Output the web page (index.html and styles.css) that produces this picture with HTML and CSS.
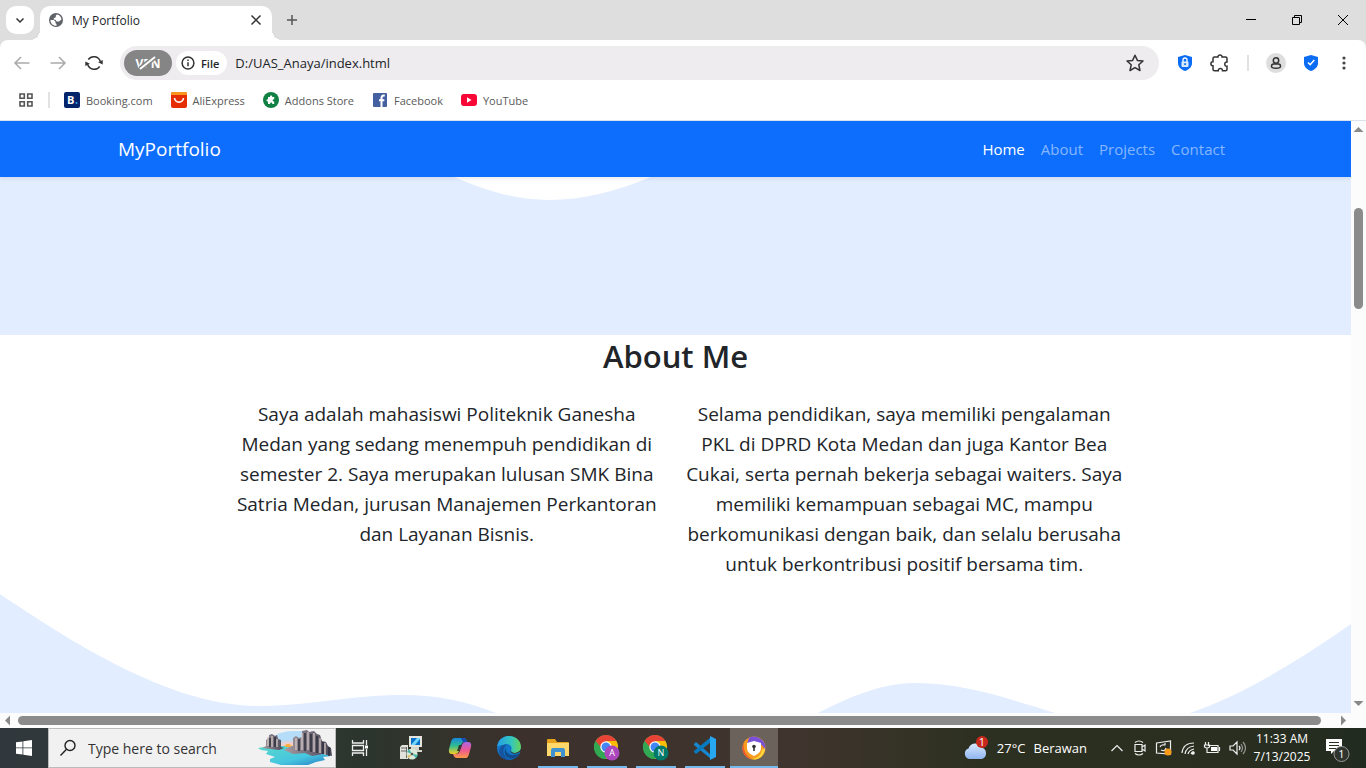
FILE: index.html
```html
<!DOCTYPE html>
<html lang="id">
<head>
<meta charset="utf-8">
<title>My Portfolio</title>
<meta name="viewport" content="width=device-width, initial-scale=1">
<link rel="stylesheet" href="styles.css">
</head>
<body>
<header class="browser">
  <div class="tabstrip">
    <button class="tab-search" aria-label="Search tabs"><svg width="28" height="28" viewBox="0 0 28 28"><path d="M10.500 12.500l3.500 3.500 3.500-3.500" class="ln" stroke-width="2"/></svg></button>
    <div class="tab">
      <svg width="16" height="16" viewBox="0 0 16 16"><circle cx="8" cy="8" r="7" fill="#5f6368"/><path d="M2.500 8h3.300l1.700 1.700v1.600l1 .8v1.700C5 14 2.500 11.500 2.500 8zM9 2.500c2.500.4 4.300 2.500 4.500 5L11 9.500H8.600L7.500 7.700H5.800V6.200l2-1V3.500z" fill="#fff"/></svg>
      <span class="tab-title">My Portfolio</span>
      <button class="plain" aria-label="Close tab"><svg width="16" height="16" viewBox="0 0 16 16"><path d="M3.500 3.500l9 9M12.500 3.500l-9 9" class="ln"/></svg></button>
    </div>
    <button class="plain new-tab" aria-label="New tab"><svg width="16" height="16" viewBox="0 0 16 16"><path d="M8 3v10M3 8h10" class="ln soft"/></svg></button>
    <div class="window-buttons">
      <button class="plain" aria-label="Minimize"><svg width="46" height="40" viewBox="0 0 46 40"><path d="M18 19.500h10" stroke="#000"/></svg></button>
      <button class="plain" aria-label="Restore"><svg width="46" height="40" viewBox="0 0 46 40" fill="none" stroke="#000"><path d="M18.500 17.500h7v7h-7zM20.500 17.500v-2h7v7h-2"/></svg></button>
      <button class="plain" aria-label="Close"><svg width="46" height="40" viewBox="0 0 46 40"><path d="M18 15l10 10M28 15L18 25" stroke="#000"/></svg></button>
    </div>
  </div>
  <div class="toolbar">
    <div class="nav-buttons">
      <button class="plain" aria-label="Back"><svg width="20" height="20" viewBox="0 0 20 20"><path d="M17.500 10H3M9 4l-6 6 6 6" class="ln muted"/></svg></button>
      <button class="plain" aria-label="Forward"><svg width="20" height="20" viewBox="0 0 20 20"><path d="M2.500 10H17M11 4l6 6-6 6" class="ln muted"/></svg></button>
      <button class="plain" aria-label="Reload"><svg width="20" height="20" viewBox="0 0 20 20"><path d="M4.300 6.500a6.800 6.800 0 0 1 12 2M15.700 13.500a6.800 6.800 0 0 1-12-2" class="ln"/><path d="M18.700 7v4.500l-4.600-2.200zM1.300 13V8.500l4.600 2.200z" fill="#333"/></svg></button>
    </div>
    <div class="omnibox">
      <span class="vpn">VPN<svg class="vpn-strike" width="26" height="18" viewBox="0 0 26 18"><path d="M5 15L20 3" stroke="#858585" stroke-width="5"/><path d="M5 15L20 3" stroke="#fff" stroke-width="2"/></svg></span>
      <span class="file-chip"><svg width="14" height="14" viewBox="0 0 14 14"><circle cx="7" cy="7" r="5.900" class="ln"/><path d="M7 6.300v4M7 3.500v1.400" class="ln"/></svg>File</span>
      <input class="address" type="text" aria-label="Address" value="D:/UAS_Anaya/index.html">
      <button class="plain" aria-label="Bookmark"><svg width="20" height="20" viewBox="0 0 20 20"><path d="M10 2.200l2.400 5.200 5.600.6-4.200 3.800 1.200 5.700-5-2.900-5 2.900 1.200-5.700L2 8l5.600-.6z" class="ln" stroke-linejoin="round"/></svg></button>
    </div>
    <div class="extensions">
      <button class="plain" aria-label="Privacy"><svg width="16" height="18" viewBox="0 0 16 18"><path d="M8 1l7 2v6c0 4-3 6.500-7 8-4-1.500-7-4-7-8V3z" fill="#0b6cf4"/><rect x="4.500" y="7.500" width="7" height="5.500" rx="1" fill="#dcecff"/><path d="M6 8V6a2 2 0 0 1 4 0v2" fill="none" stroke="#fff" stroke-width="1.300"/><path d="M7 9.200l2 2m0-2l-2 2" stroke="#0b6cf4"/></svg></button>
      <button class="plain" aria-label="Extensions"><svg width="20" height="20" viewBox="0 0 20 20"><path d="M3 5.500q0-1.500 1.500-1.500H8c-.4-2.700 4.400-2.700 4 0h3.500Q17 4 17 5.500V9c-3-.2-3 4.500 0 4.200v3q0 1.500-1.500 1.500h-3c.2-3-4.500-3-4.200 0H4.500Q3 17.700 3 16.200v-3.500c-2.800 0-2.800-4 0-4z" class="ln"/></svg></button>
      <span class="divider"></span>
      <button class="profile" aria-label="Profile"><svg width="14" height="14" viewBox="0 0 14 14"><circle cx="7" cy="4.500" r="2.700" class="ln"/><path d="M4.500 8h5q2 0 2 2.500 0 1.700-4.500 1.700T2.500 10.500Q2.500 8 4.500 8z" class="ln"/></svg></button>
      <button class="plain" aria-label="Protection"><svg width="16" height="18" viewBox="0 0 16 18"><path d="M8 1l7 2v6c0 4-3 6.500-7 8-4-1.500-7-4-7-8V3z" fill="#0b6cf4"/><path d="M5 8.500l2.200 2.200L11.300 6" fill="none" stroke="#fff" stroke-width="1.600"/></svg></button>
      <button class="plain" aria-label="Menu"><svg width="16" height="18" viewBox="0 0 16 18" fill="#444"><circle cx="8" cy="4" r="1.600"/><circle cx="8" cy="9" r="1.600"/><circle cx="8" cy="14" r="1.600"/></svg></button>
    </div>
  </div>
  <nav class="bookmarks" aria-label="Bookmarks">
    <button class="plain" aria-label="All bookmarks"><svg width="16" height="16" viewBox="0 0 16 16" fill="none" stroke="#555" stroke-width="1.600"><path d="M2 2h4.300v4.300H2zM9.700 2H14v4.300H9.700zM2 9.700h4.300V14H2zM9.700 9.700H14V14H9.700z"/></svg></button>
    <span class="divider"></span>
    <a href="#"><svg width="16" height="16" viewBox="0 0 16 16"><rect width="16" height="16" rx="2" fill="#03246b"/><text x="3" y="12" class="brand-b">B</text><circle cx="12.500" cy="11" r="1" fill="#31a8f0"/></svg>Booking.com</a>
    <a href="#"><svg width="16" height="16" viewBox="0 0 16 16"><rect width="16" height="16" rx="2" fill="#e62e04"/><path d="M0 3V2q0-2 2-2h12q2 0 2 2v1z" fill="#f7971d"/><path d="M3.500 6c.7 5.500 8.300 5.500 9 0" fill="none" stroke="#fff" stroke-width="1.600"/></svg>AliExpress</a>
    <a href="#"><svg width="16" height="16" viewBox="0 0 16 16"><circle cx="8" cy="8" r="8" fill="#108043"/><path d="M5 5h2c-.5-2 2.800-2 2.200 0h2v2.200c-2-.5-2 2.600 0 2.200V12H9.300c.4-2-2.500-2-2.200 0H5V9.500c-2 .3-2-2.700 0-2.300z" fill="#fff"/></svg>Addons Store</a>
    <a href="#"><svg width="16" height="16" viewBox="0 0 16 16"><rect x="1" y="1" width="14" height="14" rx="1" fill="#4460a0"/><path d="M12.800 3.500h-1c-1.800 0-2.300 1-2.300 2.500V15M7 8.300h5.300" fill="none" stroke="#fff" stroke-width="2"/></svg>Facebook</a>
    <a href="#"><svg width="16" height="16" viewBox="0 0 16 16"><rect y="2" width="16" height="12" rx="3" fill="#f80736"/><path d="M6 5.300l4.500 2.700L6 10.700z" fill="#fff"/></svg>YouTube</a>
  </nav>
</header>

<div class="viewport">
  <div class="site">
    <nav class="navbar">
      <a class="brand" href="#">MyPortfolio</a>
      <div class="links"><a class="active" href="#">Home</a><a href="#about">About</a><a href="#projects">Projects</a><a href="#contact">Contact</a></div>
    </nav>
    <svg class="hero-wave" viewBox="0 0 1351 158" preserveAspectRatio="none"><path fill="#e2edff" d="M0 0H454C487 14 516 23 549 23C583 23 617 14 651 0H1351V158H0z"/></svg>
    <section class="about" id="about">
      <h1>About Me</h1>
      <div class="columns">
        <p>Saya adalah mahasiswi Politeknik Ganesha<br>Medan yang sedang menempuh pendidikan di<br>semester 2. Saya merupakan lulusan SMK Bina<br>Satria Medan, jurusan Manajemen Perkantoran<br>dan Layanan Bisnis.</p>
        <p>Selama pendidikan, saya memiliki pengalaman<br>PKL di DPRD Kota Medan dan juga Kantor Bea<br>Cukai, serta pernah bekerja sebagai waiters. Saya<br>memiliki kemampuan sebagai MC, mampu<br>berkomunikasi dengan baik, dan selalu berusaha<br>untuk berkontribusi positif bersama tim.</p>
      </div>
    </section>
    <svg class="about-wave" viewBox="0 0 1351 119" preserveAspectRatio="none"><path fill="#e2edff" d="M0 0C70 47 170 112 258 112C310 112 350 101 403 101C435 101 463 106 496 119H0zM818 119C855 100 885 89 915 89C965 89 1005 104 1055 119zM1190 119C1245 100 1299 66 1351 30V119z"/></svg>
  </div>
  <div class="vbar"><svg width="15" height="16" viewBox="0 0 15 16"><path d="M7.500 6l5 5h-10z" fill="#898989"/></svg><span class="vthumb"></span><svg width="15" height="16" viewBox="0 0 15 16"><path d="M7.500 9l5-5h-10z" fill="#898989"/></svg></div>
  <div class="hbar"><svg width="15" height="15" viewBox="0 0 15 15"><path d="M5 7.500l5-5v10z" fill="#898989"/></svg><span class="hthumb"></span><svg width="15" height="15" viewBox="0 0 15 15"><path d="M10 7.500l-5-5v10z" fill="#898989"/></svg></div>
</div>

<footer class="taskbar">
  <button class="plain start" aria-label="Start"><svg width="16" height="16" viewBox="0 0 16 16" fill="#fff"><path d="M0 2.300L6.500 1.400V7.500H0zM7.300 1.300L16 0v7.500H7.300zM0 8.300h6.500v6.300L0 13.700zM7.300 8.300H16V16l-8.700-1.300z"/></svg></button>
  <label class="search">
    <svg width="18" height="18" viewBox="0 0 18 18" fill="none" stroke="#222" stroke-width="1.400"><circle cx="11" cy="6.500" r="5"/><path d="M7.500 10.200L1.500 16.500"/></svg>
    <input type="text" placeholder="Type here to search" aria-label="Type here to search">
    <svg width="76" height="36" viewBox="0 0 76 36">
      <defs><linearGradient id="sea" x2="1" y2="1"><stop stop-color="#57d8cc"/><stop offset=".6" stop-color="#46c6df"/><stop offset="1" stop-color="#2478c4"/></linearGradient><linearGradient id="rock"><stop stop-color="#a99da2"/><stop offset=".5" stop-color="#756d7c"/><stop offset="1" stop-color="#4a4858"/></linearGradient><radialGradient id="sun" cy="1"><stop stop-color="#ffbd58"/><stop offset=".5" stop-color="#f9cdc5"/><stop offset="1" stop-color="#b5dcf8"/></radialGradient></defs>
      <path d="M11 18V10Q22 1 36 1h14l9 17z" fill="url(#sun)"/>
      <path d="M1 18l14-2h43l16 10-8 1 2 3-9 2-8 3H24l-11-3v-3l5-2-9-3 2-3-7-1z" fill="url(#sea)"/>
      <path d="M5 18l4-2v-6l3-3v-2l3-1 3 2 2-1 1 4 3 1v7l3 1-5 2z" fill="url(#rock)"/>
      <path d="M27 20l5-3 4-1V8l3-2 3 2 3-1V1l5-1 2 2 5-1 3 3 3 1 2 6 4 1 2 4 3 2 1 8-9-2-11 2-7-3-12 1z" fill="url(#rock)"/>
      <path d="M11 7v9M15 6v11M20 9v8M39 8v12M45 3v17M51 2v18M57 3v19M63 8v15M68 13v12" stroke="#d8c8c4" stroke-width="1.300"/><path d="M13 8v9M18 7v10M42 9v12M48 3v18M54 4v18M60 6v17M66 12v12M72 17v9" stroke="#292b38" stroke-width="1.400"/>
      <path d="M28 17a3 3 0 0 1 6 0z" fill="#ffac38"/>
    </svg>
  </label>
  <div class="apps">
    <button class="app task-view" aria-label="Task view"><svg width="24" height="24" viewBox="0 0 24 24" fill="none" stroke="#eee" stroke-width="1.300"><path d="M4.500 4v3h11V4M4.500 20v-3h11v3M4.500 9.500h11v5h-11zM18.500 4v5M18.500 13v7"/><path d="M17 9.500h3v3h-3z" fill="#fff" stroke="none"/></svg></button>
    <button class="app" aria-label="Installer"><svg width="24" height="24" viewBox="0 0 24 24"><path d="M1 11l2-2h6v14H1z" fill="#e2e2dc"/><path d="M2 12h5M2 15h5M7.500 11v11" stroke="#666"/><path d="M10 0h13v11H10z" fill="#e5e5dd"/><path d="M12 2h9v7h-9z" fill="#0870c9"/><path d="M12 9l6-7h3v1l-5 6z" fill="#75d6ff"/><path d="M12 11h8v3h3v2H10v-2h2z" fill="#d5d5cc"/><circle cx="13" cy="18" r="5.500" fill="#dce9da"/><path d="M13 18l-5-2 2-3zm0 0l4 4 2-3z" fill="#42b5a8"/><path d="M13 18l-3 4-2-2z" fill="#e0bd62"/><circle cx="13" cy="18" r="1.300" fill="#555"/></svg></button>
    <button class="app" aria-label="Copilot"><svg width="24" height="24" viewBox="0 0 24 24"><defs><linearGradient id="ca" x2="0" y2="1"><stop stop-color="#1588df"/><stop offset=".5" stop-color="#31bd8d"/><stop offset="1" stop-color="#f8cf24"/></linearGradient><linearGradient id="cb" x2="0" y2="1"><stop stop-color="#ad67e6"/><stop offset=".5" stop-color="#ee5791"/><stop offset="1" stop-color="#fb9a46"/></linearGradient></defs><path d="M7 2h9q2 0 3 4h-3q-2 0-3 3l-2 6q-1 3-4 3H4q-4 0-3-5l2-7q1-4 4-4z" fill="url(#ca)"/><path d="M17 22H9q-3 0-4-4h3q3 0 4-3l2-6q1-3 4-3h2q4 0 3 5l-2 7q-1 4-3 4z" fill="url(#cb)"/><path d="M11 9h3l-3 6H9z" fill="#3a3430"/><path d="M13 2h3q2 0 3 4h-4z" fill="#184db7"/></svg></button>
    <button class="app" aria-label="Edge"><svg width="26" height="26" viewBox="0 0 24 24"><defs><linearGradient id="ea"><stop stop-color="#229ee6"/><stop offset=".6" stop-color="#35c6bd"/><stop offset="1" stop-color="#65d45a"/></linearGradient></defs><circle cx="12" cy="12" r="11" fill="#1277cb"/><path d="M1 11C2 3 8 1 12 1c7 0 11 5 11 10 0 4-3 6-6 6-2 0-4-1-3-3 2-4-3-7-7-5-3 0-5 1-6 2z" fill="url(#ea)"/><path d="M10 9c-5 3-4 12 4 14-7 1-12-4-11-9 1-4 5-6 7-5z" fill="#16549f"/><path d="M10 11c-3 4 2 9 9 7l3-1c-2 3-5 5-8 5-6-1-8-7-4-11z" fill="#114b8b"/><path d="M13.500 14c-1 3 5 5 9.500 1v-2c-2 4-8 5-9.500 1z" fill="#332f2b"/></svg></button>
    <button class="app running" aria-label="File Explorer"><svg width="24" height="24" viewBox="0 0 24 24"><path d="M1 4q0-1 1-1h7l2 3h11q1 0 1 1v13H1z" fill="#e5a21a"/><path d="M1 7h22v13H1z" fill="#ffd86b"/><path d="M5 21v-7q0-2 2-2h10q2 0 2 2v7h-4v-5H9v5z" fill="#3f91d0"/></svg></button>
    <button class="app running" aria-label="Chrome profile A"><svg width="28" height="26" viewBox="0 0 28 26"><circle cx="13" cy="12" r="12" fill="#32a853"/><path d="M2.600 6a12 12 0 0 1 20.800 0H13v12z" fill="#e94335"/><path d="M23.400 6A12 12 0 0 1 13 24l5-9-5-9z" fill="#fbbc05"/><path d="M2.600 6L8 15h7l-2 9A12 12 0 0 1 2.600 6" fill="#32a853"/><circle cx="13" cy="12" r="5.700" fill="#fff"/><circle cx="13" cy="12" r="4.500" fill="#4285f4"/><circle cx="19" cy="18" r="7.500" fill="#ab47bc"/><text x="19" y="21" class="badge-text">A</text></svg></button>
    <button class="app running" aria-label="Chrome profile N"><svg width="28" height="26" viewBox="0 0 28 26"><circle cx="13" cy="12" r="12" fill="#32a853"/><path d="M2.600 6a12 12 0 0 1 20.800 0H13v12z" fill="#e94335"/><path d="M23.400 6A12 12 0 0 1 13 24l5-9-5-9z" fill="#fbbc05"/><path d="M2.600 6L8 15h7l-2 9A12 12 0 0 1 2.600 6" fill="#32a853"/><circle cx="13" cy="12" r="5.700" fill="#fff"/><circle cx="13" cy="12" r="4.500" fill="#4285f4"/><circle cx="19" cy="18" r="7.500" fill="#00796b"/><text x="19" y="21" class="badge-text">N</text></svg></button>
    <button class="app running" aria-label="Visual Studio Code"><svg width="24" height="24" viewBox="0 0 24 24"><path d="M1 8l2-2 15 13v4L1 9z" fill="#1687d0"/><path d="M1 16l2 2L18 6V1L1 15z" fill="#087abf"/><path d="M17 0l6 3v18l-6 3z" fill="#29a8f2"/></svg></button>
    <button class="app running current" aria-label="Secure browser"><svg width="24" height="24" viewBox="0 0 24 24"><circle cx="12" cy="12" r="11.500" fill="#f79c1c"/><path d="M7 1.700A11.500 11.500 0 0 1 23 15c-1-5-4-8-10-8L5 8z" fill="#7952d9"/><path d="M2 6c-1 7 1 13 8 17-6-1-10-5-9.500-12z" fill="#ee5b32"/><path d="M23 12c0 7-6 13-13 11 6-1 9-4 10-9z" fill="#ffd83f"/><path d="M12 5l7 2v5c0 4-3 6-7 8-4-2-7-4-7-8V7z" fill="#fff"/><circle cx="12" cy="10.500" r="1.800" fill="#333"/><path d="M11.200 11h1.600v4h-1.600z" fill="#333"/></svg></button>
  </div>
  <div class="weather"><svg width="26" height="26" viewBox="0 0 26 26"><defs><linearGradient id="cl" x2="0" y2="1"><stop stop-color="#d9e8ff"/><stop offset="1" stop-color="#8fb5ef"/></linearGradient></defs><path d="M6 24a5.500 5.500 0 0 1-.5-10.500 7 7 0 0 1 13-1A6 6 0 0 1 19 24z" fill="url(#cl)"/><circle cx="19" cy="7" r="6" fill="#c9281d"/><text x="19" y="11" class="alert-text">1</text></svg><span>27°C</span><span>Berawan</span></div>
  <div class="tray">
    <svg width="16" height="18" viewBox="0 0 16 18"><path d="M2.500 12L8 6.500l5.500 5.500"/></svg>
    <svg width="16" height="18" viewBox="0 0 16 18"><path d="M3 5.500h7v7H3zM10 8l3-2v6l-3-2M3 3.500q4-3 8 0M3 14.500q4 3 8 0"/></svg>
    <svg width="18" height="18" viewBox="0 0 18 18"><path d="M1.500 4l14-2v13l-14-1zM5 8q1-3 5-2M11 9q-1 4-5 2M10 4v2H7"/><circle cx="13" cy="13" r="3.500" fill="#f99b19" stroke="none"/></svg>
    <svg width="16" height="18" viewBox="0 0 16 18"><path d="M2 14Q3 4 14 4M5 15q1-7 9-8M8 15q1-4 6-5M11 15q1-2 3-2"/><circle cx="13" cy="14" r="1.200" fill="#fff"/></svg>
    <svg width="18" height="18" viewBox="0 0 18 18"><path d="M5 6.500h10v7H5M2.500 3v3M5.500 3v3M1.500 6h5v2q-2.500 2-5 0zM4 9v4.500h2M16.500 8v4"/><path d="M8 8h6v4H8z" fill="#fff" stroke="none"/></svg>
    <svg width="18" height="18" viewBox="0 0 18 18"><path d="M2 7h3l4-4v12l-4-4H2zM11 7q2 2 0 4"/><path d="M13 5q3 4 0 8M15 3q5 6 0 12" opacity=".55"/></svg>
  </div>
  <div class="clock"><span>11:33 AM</span><span>7/13/2025</span></div>
  <button class="plain notify" aria-label="Notifications"><svg width="26" height="28" viewBox="0 0 26 28"><path d="M1 5h16v12H9l-3 3v-3H1z" fill="#fff"/><path d="M4 8.500h10M4 11.500h10M4 14.500h7" stroke="#29301f" stroke-width="1.200"/><circle cx="16.500" cy="20" r="7.500" fill="#30342e" stroke="#999"/><text x="16.500" y="24" class="alert-text">1</text></svg></button>
</footer>
</body>
</html>
```
FILE: styles.css
```css
* { box-sizing: border-box; }
body { margin: 0; height: 100vh; display: flex; flex-direction: column; overflow: hidden; font-family: "Segoe UI", "Open Sans", "Noto Sans", sans-serif; color: #212529; background: #fff; }
button, input { font: inherit; color: inherit; }
svg { display: block; flex: none; }
a { text-decoration: none; }
.plain { border: 0; padding: 0; background: none; display: flex; align-items: center; justify-content: center; }
.ln { fill: none; stroke: #333; stroke-width: 1.5; }
.muted { stroke: #aaa; }
.soft { stroke: #555; }
.divider { width: 2px; height: 16px; background: #e2e2e2; }

.browser { flex: none; background: #dedede; border-bottom: 1px solid #d9e3ee; }
.tabstrip { display: flex; align-items: center; height: 40px; padding-left: 6px; }
.tab-search { width: 28px; height: 28px; padding: 0; border: 0; border-radius: 10px; background: #fff; margin-right: 6px; }
.tab { align-self: flex-end; position: relative; display: flex; align-items: center; gap: 8px; width: 232px; height: 34px; padding: 0 8px 6px; border-radius: 10px 10px 0 0; background: #fff; }
.tab::before, .tab::after { content: ""; position: absolute; bottom: 0; width: 10px; height: 10px; }
.tab::before { left: -10px; background: radial-gradient(circle at 0 0, transparent 10px, #fff 10px); }
.tab::after { right: -10px; background: radial-gradient(circle at 100% 0, transparent 10px, #fff 10px); }
.tab-title { flex: 1; font-size: 12px; }
.new-tab { margin-left: 12px; }
.window-buttons { display: flex; margin-left: auto; }
.toolbar { display: flex; align-items: center; height: 46px; background: #fff; border-radius: 8px 8px 0 0; }
.nav-buttons { display: flex; gap: 16px; padding: 0 16px 0 12px; }
.omnibox { flex: 1; display: flex; align-items: center; height: 34px; padding: 0 14px 0 4px; border-radius: 17px; background: #eeecee; }
.vpn { position: relative; display: flex; align-items: center; justify-content: center; width: 48px; height: 26px; border-radius: 13px; background: #858585; color: #fff; font-size: 12px; font-weight: 700; }
.vpn-strike { position: absolute; inset: 4px 11px; }
.file-chip { display: flex; align-items: center; gap: 6px; height: 24px; margin-left: 4px; padding: 0 8px 0 5px; border-radius: 12px; background: #fff; font-size: 11px; font-weight: 600; }
.address { flex: 1; min-width: 0; border: 0; background: none; outline: 0; padding: 0 8px; font-size: 13px; }
.extensions { display: flex; align-items: center; gap: 17px; padding: 0 14px 0 18px; }
.profile { display: flex; align-items: center; justify-content: center; width: 20px; height: 20px; padding: 0; border: 0; border-radius: 50%; background: #dedede; }
.bookmarks { display: flex; align-items: center; height: 34px; padding: 0 18px 6px; gap: 18px; background: #fff; font-size: 11px; }
.bookmarks .divider { margin: 0 -4px; }
.bookmarks a { display: flex; align-items: center; gap: 6px; color: #5a5a5a; }
.brand-b { font: 700 11px "Open Sans", sans-serif; fill: #fff; }

.viewport { flex: 1; min-height: 0; display: grid; grid-template-columns: minmax(0, 1fr) 15px; grid-template-rows: minmax(0, 1fr) 15px; background: #fcfcfc; }
.site { display: flex; flex-direction: column; overflow: hidden; background: #fff; }
.navbar { position: relative; flex: none; display: flex; align-items: center; justify-content: space-between; height: 56px; padding: 0 126px 0 118px; background: #0d6efd; box-shadow: 0 2px 4px rgba(0, 0, 0, .075); }
.brand { color: #fff; font-size: 19px; }
.links { display: flex; gap: 16px; font-size: 15px; }
.links a { color: #86b7fe; }
.links .active { color: #fff; }
.hero-wave { width: 100%; height: 158px; }
.about { padding: 0 228px; text-align: center; }
.about h1 { margin: 0 0 22px; font-size: 31px; line-height: 42px; font-weight: 600; }
.columns { display: grid; grid-template-columns: 1fr 1fr; gap: 20px; }
.columns p { margin: 0; font-size: 19px; line-height: 30px; white-space: nowrap; }
.about-wave { width: 100%; height: 119px; margin-top: auto; }
.vbar { display: flex; flex-direction: column; }
.vthumb { width: 9px; height: 101px; margin: 71px 3px auto; border-radius: 5px; background: #8b8b8b; }
.hbar { display: flex; align-items: center; }
.hthumb { flex: 1; height: 9px; margin: 0 15px 0 3px; border-radius: 5px; background: #8b8b8b; }

.taskbar { flex: none; display: flex; align-items: center; height: 40px; color: #fff; font-size: 14px; background: linear-gradient(90deg, #30383d 0, #2c352d 27%, #3b302b 38%, #40352e 58%, #2c3020 72%, #292e20 90%, #222b20); }
.start { width: 48px; height: 40px; }
.search { display: flex; align-items: center; width: 288px; height: 40px; padding: 0 2px 0 10px; gap: 11px; border: 1px solid #bbb; background: #f1f1f1; color: #333; }
.search input { flex: 1; min-width: 0; border: 0; padding: 0; background: none; outline: 0; }
.search input::placeholder { color: #333; opacity: 1; }
.apps { display: flex; gap: 1px; }
.app { display: flex; align-items: center; justify-content: center; width: 48px; height: 40px; padding: 0; border: 0; background: none; }
.task-view { margin-right: 2px; }
.running { background: linear-gradient(#76b9ed, #76b9ed) center bottom / 40px 2px no-repeat; }
.current { background: linear-gradient(#76b9ed, #76b9ed) center bottom / 48px 2px no-repeat, #6b625b; }
.badge-text { font: 9px "Open Sans", sans-serif; fill: #fff; text-anchor: middle; }
.alert-text { font: 11px "Open Sans", sans-serif; fill: #fff; text-anchor: middle; }
.weather { display: flex; align-items: center; gap: 8px; margin-left: auto; padding-right: 22px; font-size: 13px; }
.tray { display: flex; align-items: center; gap: 7px; }
.tray svg { fill: none; stroke: #eee; stroke-width: 1.2; }
.clock { display: flex; flex-direction: column; align-items: center; width: 72px; font-size: 12px; line-height: 18px; }
.notify { width: 40px; height: 40px; margin-right: 8px; }
```
